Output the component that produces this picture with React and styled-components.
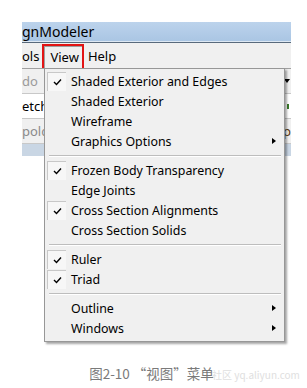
import React from "react";
import styled, { createGlobalStyle } from "styled-components";

const Global = createGlobalStyle`
  html, body { margin: 0; padding: 0; background: #fff; }
  body { font-family: "Noto Sans", "Liberation Sans", sans-serif; }
`;

const Page = styled.div`
  position: relative;
  width: 307px;
  height: 388px;
  overflow: hidden;
  background: #fff;
  padding-top: 22px;
  box-sizing: border-box;
`;

const Win = styled.div`
  margin-left: 22px;
  width: 269px;
  display: flex;
  flex-direction: column;
`;

const TitleBar = styled.div`
  height: 20px;
  background: linear-gradient(#bcd3ec, #a9c5e3);
  border-bottom: 1px solid #586a7c;
  font-size: 14px;
  line-height: 18px;
  color: #000;
  display: flex;
  align-items: center;
  box-shadow: inset 0 -1px 0 #dde8f3;
`;

const MenuBar = styled.div`
  height: 25px;
  background: #f0f0f0;
  display: flex;
  align-items: center;
  font-size: 13px;
  color: #000;
`;

const MenuTitle = styled.div`
  height: 100%;
  display: flex;
  align-items: center;
  padding: ${(p) => p.$pad || "0 4px"};
  box-sizing: border-box;
  ${(p) =>
    p.$open &&
    `
    border: 2px solid #e21414;
    margin-left: 3px;
    margin-top: 2px;
    height: 26px;
    padding: 0 3px 0 6px;
    box-shadow: inset 1px 1px 0 #a0a0a0;
  `}
`;

const Body = styled.div`
  display: flex;
  flex-direction: column;
  background: #f0f0f0;
  border-top: 1px solid #a0a0a0;
`;

const Row = styled.div`
  height: ${(p) => p.$h || 24}px;
  display: flex;
  align-items: center;
  justify-content: space-between;
  font-size: 13px;
  color: ${(p) => p.$color || "#000"};
  background: ${(p) => p.$bg || "#f0f0f0"};
  border-bottom: 1px solid ${(p) => p.$line || "#c8c8c8"};
`;

const Arrow = styled.span`
  width: 0;
  height: 0;
  border-left: 3px solid transparent;
  border-right: 3px solid transparent;
  border-top: 4px solid #000;
  margin-right: 1px;
`;

const Dot = styled.span`
  width: 2px;
  height: 5px;
  background: #3a7a2a;
  margin-right: 2px;
`;

const Blank = styled.div`
  height: 12px;
  background: #c9d6e4;
`;

const Menu = styled.div`
  position: absolute;
  left: 44px;
  top: 68px;
  width: 237px;
  background: #f0f0f0;
  border: 1px solid #979797;
  box-shadow: 2px 2px 2px rgba(0, 0, 0, 0.35);
  padding: 2px 0 3px 2px;
  display: flex;
  flex-direction: column;
`;

const Item = styled.div`
  height: 20px;
  display: flex;
  align-items: center;
  font-size: 12.4px;
  color: #000;
`;

const CheckBox = styled.div`
  width: 19px;
  height: 19px;
  margin-right: 5px;
  box-sizing: border-box;
  display: flex;
  align-items: center;
  justify-content: center;
  ${(p) =>
    p.$on &&
    `
    border-left: 1px solid #c8c8c8;
    border-top: 1px solid #c8c8c8;
    background: #f7f7f7;
  `}
`;

const Label = styled.span`
  flex: 1;
`;

const Sub = styled.span`
  width: 0;
  height: 0;
  border-top: 3.5px solid transparent;
  border-bottom: 3.5px solid transparent;
  border-left: 4px solid #000;
  margin-right: 8px;
`;

const Sep = styled.div`
  height: 1px;
  margin: 4px 3px 3px 2px;
  background: #bdbdbd;
  border-bottom: 1px solid #fff;
`;

const Caption = styled.div`
  position: absolute;
  left: 0;
  right: 0;
  top: 363px;
  text-align: center;
  font-family: "Noto Sans CJK SC", sans-serif;
  font-size: 13.5px;
  color: #7a7a7a;
  padding-right: 4px;
`;

const Watermark = styled.div`
  position: absolute;
  left: 212px;
  top: 367px;
  white-space: nowrap;
  font-family: "Noto Sans CJK SC", "Liberation Sans", sans-serif;
  font-size: 10px;
  color: #e0e0e0;
`;

const Check = () => (
  <svg width="9" height="8" viewBox="0 0 9 8">
    <path d="M1 4 L3.5 6.5 L8 1.5" fill="none" stroke="#000" strokeWidth="1.4" />
  </svg>
);

const groups = [
  [
    ["Shaded Exterior and Edges", true],
    ["Shaded Exterior"],
    ["Wireframe"],
    ["Graphics Options", false, true],
  ],
  [
    ["Frozen Body Transparency", true],
    ["Edge Joints"],
    ["Cross Section Alignments", true],
    ["Cross Section Solids"],
  ],
  [
    ["Ruler", true],
    ["Triad", true],
  ],
  [
    ["Outline", false, true],
    ["Windows", false, true],
  ],
];

export default function App() {
  return (
    <Page>
      <Global />
      <Win>
        <TitleBar>gnModeler</TitleBar>
        <MenuBar>
          <MenuTitle $pad="0 0 0 0">ols</MenuTitle>
          <MenuTitle $open>View</MenuTitle>
          <MenuTitle $pad="0 0 0 4px">Help</MenuTitle>
        </MenuBar>
        <Body>
          <Row $color="#9a9a9a">
            <span>do</span>
            <Arrow />
          </Row>
          <Row $bg="#fff" $h={24}>
            <span>etch:</span>
            <Dot />
          </Row>
          <Row $color="#8a8a8a">
            <span>polc</span>
            <span style={{ color: "#5a3a10" }}>p</span>
          </Row>
          <Blank />
        </Body>
      </Win>
      <Menu>
        {groups.map((g, gi) => (
          <React.Fragment key={gi}>
            {gi > 0 && <Sep />}
            {g.map(([label, on, sub]) => (
              <Item key={label}>
                <CheckBox $on={on}>{on && <Check />}</CheckBox>
                <Label>{label}</Label>
                {sub && <Sub />}
              </Item>
            ))}
          </React.Fragment>
        ))}
      </Menu>
      <Caption>图2-10 “视图”菜单</Caption>
      <Watermark>社区 yq.aliyun.com</Watermark>
    </Page>
  );
}
